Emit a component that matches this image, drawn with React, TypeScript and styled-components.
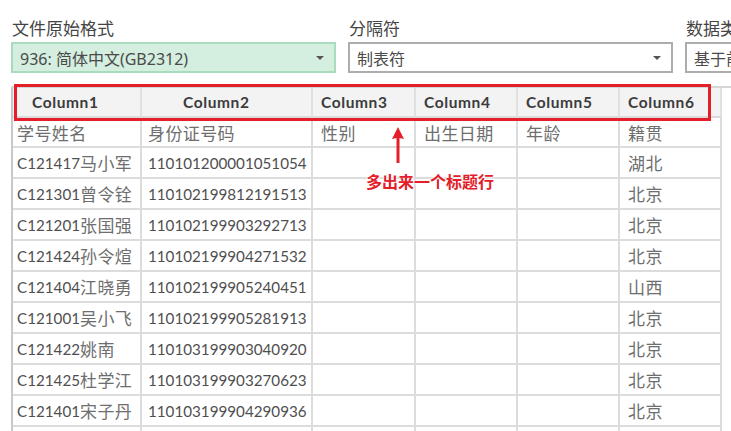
import React from "react";
import styled, { createGlobalStyle } from "styled-components";

const GlobalStyle = createGlobalStyle`
  html, body { margin: 0; padding: 0; background: #ffffff; overflow: hidden; }
  body { font-family: "Noto Sans", "Noto Sans CJK SC", sans-serif; }
`;

const Page = styled.div`
  width: 731px;
  height: 431px;
  overflow: hidden;
  padding-left: 11px;
  box-sizing: border-box;
`;

const Toolbar = styled.div`
  display: flex;
  gap: 12px;
  padding-top: 16px;
  width: 760px;
`;

const Field = styled.div`
  display: flex;
  flex-direction: column;
  width: 325px;
  flex-shrink: 0;
`;

const Label = styled.div`
  font-family: "Noto Sans CJK SC", sans-serif;
  font-size: 17px;
  line-height: 24px;
  height: 26px;
  color: #444444;
  padding-left: 1px;
  white-space: nowrap;
`;

const Select = styled.div<{ $active?: boolean }>`
  height: 31px;
  box-sizing: border-box;
  border: 2px solid ${(p) => (p.$active ? "#a9dbbd" : "#adadad")};
  background: ${(p) => (p.$active ? "#d4eee0" : "#ffffff")};
  display: flex;
  align-items: center;
  justify-content: space-between;
  padding: 0 10px 0 7px;
  font-family: "Noto Sans", "Noto Sans CJK SC", sans-serif;
  font-size: 16px;
  color: #4a4a4a;
  white-space: nowrap;
`;

const Caret = styled.span`
  width: 0;
  height: 0;
  border-left: 4px solid transparent;
  border-right: 4px solid transparent;
  border-top: 4px solid #555555;
`;

const TableWrap = styled.div`
  position: relative;
  margin-top: 13px;
  width: 720px;
  border-top: 2px solid #d6d6d6;
`;

const COLS = "129px 171px 103px 102px 102px 102px";

const Row = styled.div<{ $h: number }>`
  display: grid;
  grid-template-columns: ${COLS};
  width: 711px;
  height: ${(p) => p.$h}px;
  border-left: 2px solid #c8c8c8;
  box-sizing: border-box;
`;

const HeadCell = styled.div<{ $pl: number }>`
  background: #f3f3f3;
  border-right: 2px solid #e0e0e0;
  border-bottom: 2px solid #dadada;
  box-sizing: border-box;
  display: flex;
  align-items: center;
  padding-left: ${(p) => p.$pl}px;
  font-family: "Lato", sans-serif;
  font-weight: 700;
  font-size: 15.5px;
  letter-spacing: 0.6px;
  color: #3c3c3c;
`;

const Cell = styled.div<{ $pl: number }>`
  border-right: 2px solid #dcdcdc;
  border-bottom: 2px solid #dcdcdc;
  box-sizing: border-box;
  display: flex;
  align-items: center;
  padding-left: ${(p) => p.$pl}px;
  font-family: "Lato", sans-serif;
  font-size: 15.2px;
  color: #4f4f4f;
  white-space: nowrap;
  overflow: hidden;
`;

const Han = styled.span`
  font-family: "Noto Sans CJK SC", sans-serif;
  font-size: 17px;
  color: #6e6e6e;
  letter-spacing: 0.4px;
`;

const RedBox = styled.div`
  position: absolute;
  left: 3px;
  top: -4px;
  width: 697px;
  height: 37px;
  box-sizing: border-box;
  border: 3px solid #e3202a;
  pointer-events: none;
`;

const ArrowSvg = styled.svg`
  position: absolute;
  left: 379px;
  top: 38px;
`;

const Note = styled.div`
  position: absolute;
  left: 355px;
  top: 83px;
  font-family: "Noto Sans CJK SC", sans-serif;
  font-weight: 700;
  font-size: 16px;
  line-height: 20px;
  color: #e3202a;
  text-shadow: 0 0 2px #fff, 0 0 2px #fff, 0 0 3px #fff;
`;

const headers = [
  { t: "Column1", pl: 19 },
  { t: "Column2", pl: 41 },
  { t: "Column3", pl: 8 },
  { t: "Column4", pl: 8 },
  { t: "Column5", pl: 8 },
  { t: "Column6", pl: 8 },
];

const pads = [4, 6, 8, 8, 8, 8];

const rows: string[][] = [
  ["学号姓名", "身份证号码", "性别", "出生日期", "年龄", "籍贯"],
  ["C121417马小军", "110101200001051054", "", "", "", "湖北"],
  ["C121301曾令铨", "110102199812191513", "", "", "", "北京"],
  ["C121201张国强", "110102199903292713", "", "", "", "北京"],
  ["C121424孙令煊", "110102199904271532", "", "", "", "北京"],
  ["C121404江晓勇", "110102199905240451", "", "", "", "山西"],
  ["C121001吴小飞", "110102199905281913", "", "", "", "北京"],
  ["C121422姚南", "110103199903040920", "", "", "", "北京"],
  ["C121425杜学江", "110103199903270623", "", "", "", "北京"],
  ["C121401宋子丹", "110103199904290936", "", "", "", "北京"],
  ["", "", "", "", "", ""],
];

function renderText(s: string) {
  const parts = s.match(/[\u4e00-\u9fff]+|[^\u4e00-\u9fff]+/g) || [];
  return parts.map((p, i) =>
    /[\u4e00-\u9fff]/.test(p) ? <Han key={i}>{p}</Han> : <span key={i}>{p}</span>
  );
}

export default function App() {
  return (
    <>
      <GlobalStyle />
      <Page>
        <Toolbar>
          <Field>
            <Label>文件原始格式</Label>
            <Select $active>
              <span>936: 简体中文(GB2312)</span>
              <Caret />
            </Select>
          </Field>
          <Field>
            <Label>分隔符</Label>
            <Select>
              <span>制表符</span>
              <Caret />
            </Select>
          </Field>
          <Field>
            <Label>数据类型检测</Label>
            <Select>
              <span>基于前 200 行</span>
              <Caret />
            </Select>
          </Field>
        </Toolbar>
        <TableWrap>
          <Row $h={30}>
            {headers.map((h) => (
              <HeadCell key={h.t} $pl={h.pl}>
                {h.t}
              </HeadCell>
            ))}
          </Row>
          {rows.map((r, i) => (
            <Row key={i} $h={i === 0 ? 30 : 31}>
              {r.map((c, j) => (
                <Cell key={j} $pl={pads[j]}>
                  {renderText(c)}
                </Cell>
              ))}
            </Row>
          ))}
          <RedBox />
          <ArrowSvg width="16" height="38" viewBox="0 0 16 38">
            <path d="M8 1 L14 13 L9.5 12 L9.5 37 L6.5 37 L6.5 12 L2 13 Z" fill="#e3202a" />
          </ArrowSvg>
          <Note>多出来一个标题行</Note>
        </TableWrap>
      </Page>
    </>
  );
}
